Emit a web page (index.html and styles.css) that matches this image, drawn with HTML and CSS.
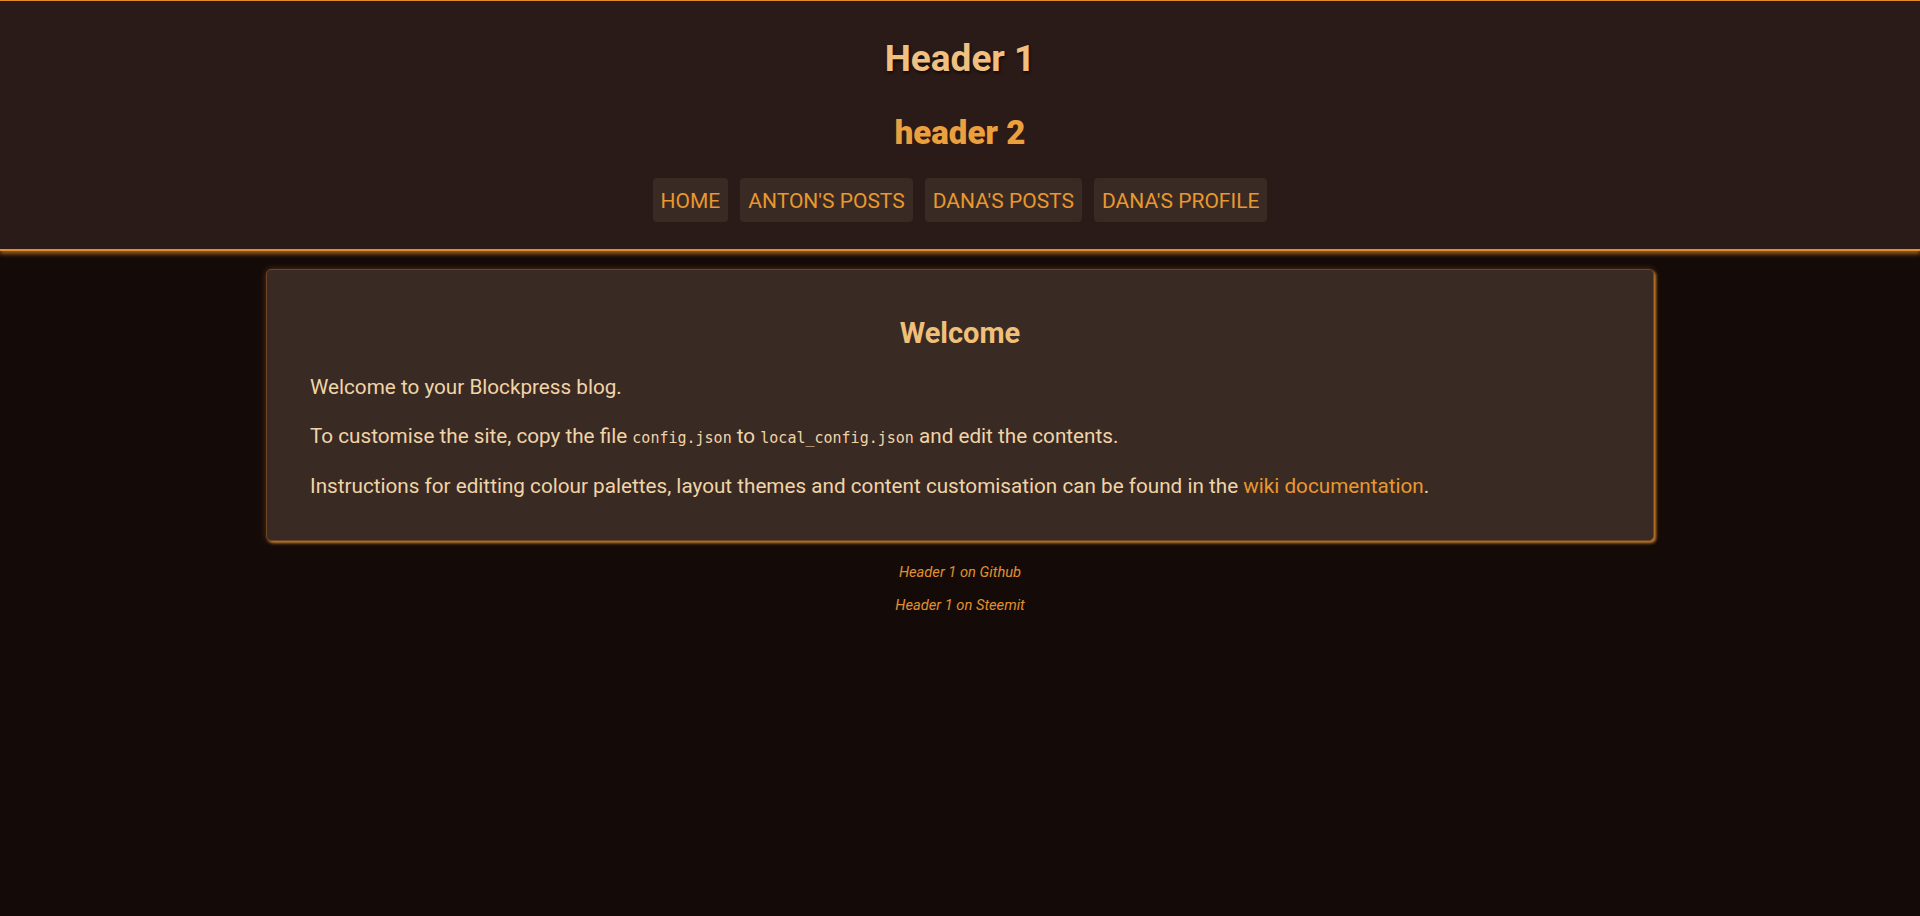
FILE: index.html
```html
<!DOCTYPE html>
<html lang="en">
<head>
<meta charset="utf-8">
<title>Header 1</title>
<link rel="stylesheet" href="styles.css">
</head>
<body>
<header class="site-header">
  <h1 class="site-title">Header 1</h1>
  <h2 class="site-subtitle">header 2</h2>
  <nav class="nav">
    <a class="nav-item" href="#">HOME</a>
    <a class="nav-item" href="#">ANTON'S POSTS</a>
    <a class="nav-item" href="#">DANA'S POSTS</a>
    <a class="nav-item" href="#">DANA'S PROFILE</a>
  </nav>
</header>
<main class="main">
  <article class="card">
    <h2 class="card-title">Welcome</h2>
    <p class="card-text">Welcome to your Blockpress blog.</p>
    <p class="card-text">To customise the site, copy the file <code class="code">config.json</code> to <code class="code">local_config.json</code> and edit the contents.</p>
    <p class="card-text">Instructions for editting colour palettes, layout themes and content customisation can be found in the <a class="link" href="#">wiki documentation</a>.</p>
  </article>
</main>
<footer class="footer">
  <p class="footer-line"><a class="footer-link" href="#">Header 1 on Github</a></p>
  <p class="footer-line"><a class="footer-link" href="#">Header 1 on Steemit</a></p>
</footer>
</body>
</html>
```
FILE: styles.css
```css
html, body {
  margin: 0;
  padding: 0;
}
body {
  background: #140b09;
  font-family: Roboto, "Liberation Sans", sans-serif;
  color: #f0d4a8;
  min-height: 916px;
}
.site-header {
  background: #2a1a18;
  border-top: 1px solid #e08a2a;
  border-bottom: 2px solid #dc8e32;
  box-shadow: 0 3px 4px #9a581a;
  padding: 36px 0 27px;
  text-align: center;
}
.site-title {
  margin: 0;
  font-size: 37px;
  line-height: 44px;
  font-weight: 700;
  color: #f0c080;
  text-shadow: 1px 2px 3px rgba(0, 0, 0, 0.6);
}
.site-subtitle {
  margin: 32px 0 0;
  font-size: 33px;
  line-height: 40px;
  font-weight: 900;
  color: #eba040;
  text-shadow: -1px 1px 1px rgba(60, 25, 5, 0.9);
}
.nav {
  margin-top: 25px;
  display: flex;
  justify-content: center;
  gap: 12px;
}
.nav-item {
  display: block;
  background: #3a2a24;
  color: #e8982f;
  text-decoration: none;
  font-size: 21px;
  line-height: 24px;
  padding: 11px 8px 9px;
  border-radius: 4px;
}
.main {
  padding-top: 18px;
}
.card {
  box-sizing: border-box;
  width: 1388px;
  margin: 0 auto;
  background: #3a2a24;
  border: 1px solid #6e4426;
  border-radius: 5px;
  box-shadow: 2px 2px 3px #c47a28, 0 0 6px rgba(200, 120, 40, 0.35);
  padding: 45px 43px 39px;
}
.card-title {
  margin: 0;
  text-align: center;
  font-size: 29px;
  line-height: 36px;
  font-weight: 700;
  color: #f0c07a;
}
.card-text {
  margin: 22px 0 0;
  font-size: 20.7px;
  line-height: 28.5px;
}
.card-text + .card-text {
  margin-top: 20px;
}
.code {
  font-family: "DejaVu Sans Mono", "Liberation Mono", monospace;
  font-size: 15px;
}
.link {
  color: #e8982f;
  text-decoration: none;
}
.footer {
  padding-top: 22px;
  text-align: center;
}
.footer-line {
  margin: 0 0 15px;
  font-size: 14.7px;
  line-height: 18px;
  font-style: italic;
}
.footer-link {
  color: #e0902f;
  text-decoration: none;
}
```
